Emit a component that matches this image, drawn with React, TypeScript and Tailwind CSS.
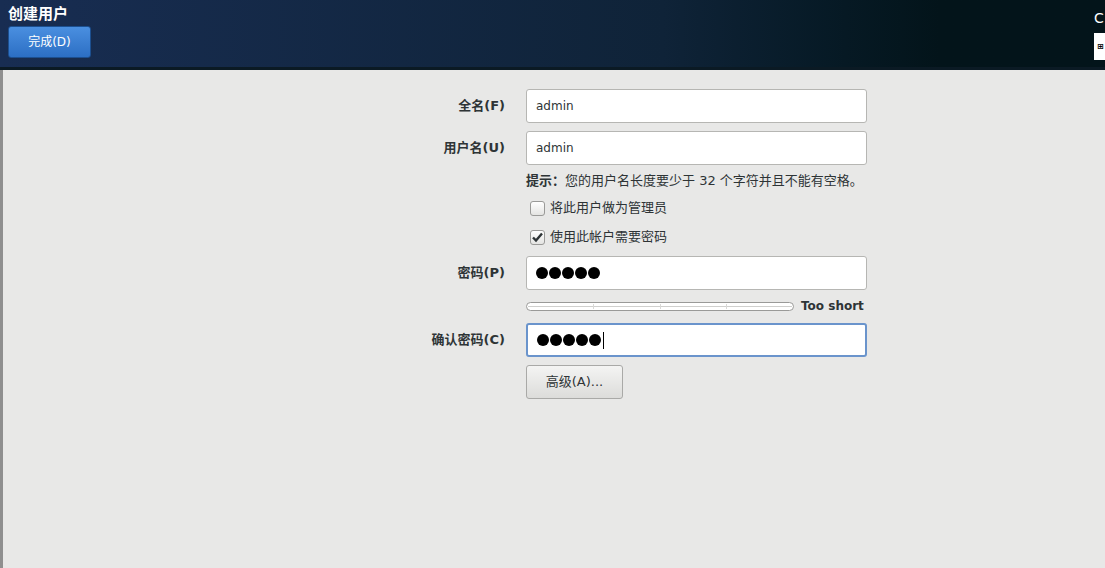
import React from "react";

const font = { fontFamily: '"DejaVu Sans", "Noto Sans CJK SC", sans-serif' };

function Field({ label, value, focused }: { label: string; value: React.ReactNode; focused?: boolean }) {
  return (
    <div className="flex items-center">
      <div className="w-[506px] pr-[1px] text-right text-[13px] font-bold text-[#2e3436]">{label}</div>
      <div
        className={
          "ml-[20px] flex h-[34px] w-[341px] items-center rounded-[3px] bg-white px-[9px] " +
          (focused ? "border-2 border-[#6a94cc]" : "border border-[#b6b6b3]")
        }
      >
        {value}
      </div>
    </div>
  );
}

function Dots({ caret }: { caret?: boolean }) {
  return (
    <span className="flex items-center gap-[1px]">
      {[0, 1, 2, 3, 4].map((i) => (
        <span key={i} className="inline-block h-[12px] w-[12px] rounded-full bg-black" />
      ))}
      {caret && <span className="ml-[1px] inline-block h-[17px] w-[1px] bg-black" />}
    </span>
  );
}

function Check({ checked, label }: { checked?: boolean; label: string }) {
  return (
    <div className="ml-[530px] flex h-[16px] items-center gap-[5px]">
      <span className="flex h-[15px] w-[15px] items-center justify-center rounded-[3px] border border-[#9a9a98] bg-gradient-to-b from-white to-[#e4e4e2]">
        {checked && (
          <svg width="13" height="13" viewBox="0 0 13 13">
            <path d="M2 6.5 L5 9.5 L11 2.5" fill="none" stroke="#2e3436" strokeWidth="2.4" />
          </svg>
        )}
      </span>
      <span className="text-[13px] leading-[16px] text-[#2e3436]">{label}</span>
    </div>
  );
}

export default function App() {
  return (
    <div className="h-[568px] w-[1105px] overflow-hidden bg-[#e8e8e7]" style={font}>
      <header className="relative h-[70px] border-b-[3px] border-[#0b1a24] bg-gradient-to-r from-[#182d52] via-[#0f2338] via-60% to-[#03141a] to-85%">
        <div className="pl-[8px] pt-[4px] text-[15px] font-bold leading-[20px] text-white">创建用户</div>
        <button className="ml-[8px] mt-[2px] flex h-[32px] w-[83px] items-center justify-center rounded-[3px] border border-[#1c4f8f] bg-gradient-to-b from-[#4a8fe0] to-[#2c6fc4] text-[12px] text-white">
          完成(D)
        </button>
        <div className="absolute left-[1094px] top-[8px] text-[14px] text-white">C</div>
        <div className="absolute left-[1094px] top-[33px] flex h-[27px] w-[11px] items-center bg-white pl-[3px]">
          <span className="text-[8px] font-bold leading-none text-black">⊞</span>
        </div>
      </header>
      <main className="flex h-[498px] flex-col border-l-[3px] border-[#8f8f8f] pt-[19px]">
        <div className="-ml-[3px]">
          <Field label="全名(F)" value={<span className="text-[12px] text-[#2e3436]">admin</span>} />
          <div className="mt-[8px]">
            <Field label="用户名(U)" value={<span className="text-[12px] text-[#2e3436]">admin</span>} />
          </div>
          <div className="ml-[526px] mt-[8px] text-[13px] leading-[16px] text-[#2e3436]">
            <span className="font-bold">提示：</span>您的用户名长度要少于 32 个字符并且不能有空格。
          </div>
          <div className="mt-[11px]">
            <Check label="将此用户做为管理员" />
          </div>
          <div className="mt-[13px]">
            <Check checked label="使用此帐户需要密码" />
          </div>
          <div className="mt-[11px]">
            <Field label="密码(P)" value={<Dots />} />
          </div>
          <div className="ml-[526px] mt-[8px] flex h-[16px] items-center">
            <div className="flex h-[9px] w-[268px] rounded-full border border-[#9a9a98] bg-white p-[1px]">
              {[0, 1, 2, 3].map((i) => (
                <div key={i} className="flex-1 border-r border-[#d8d8d6] last:border-r-0">
                  <div className="mt-[2px] h-[1px] bg-[#cfcfcd]" />
                </div>
              ))}
            </div>
            <span className="ml-[7px] text-[12px] font-bold leading-[16px] text-[#2e3436]">Too short</span>
          </div>
          <div className="mt-[9px]">
            <Field label="确认密码(C)" value={<Dots caret />} focused />
          </div>
          <button className="ml-[526px] mt-[8px] flex h-[34px] w-[97px] items-center justify-center rounded-[3px] border border-[#a9a9a7] bg-gradient-to-b from-[#f4f4f3] to-[#dcdcda] text-[13px] text-[#2e3436]">
            高级(A)...
          </button>
        </div>
      </main>
    </div>
  );
}
